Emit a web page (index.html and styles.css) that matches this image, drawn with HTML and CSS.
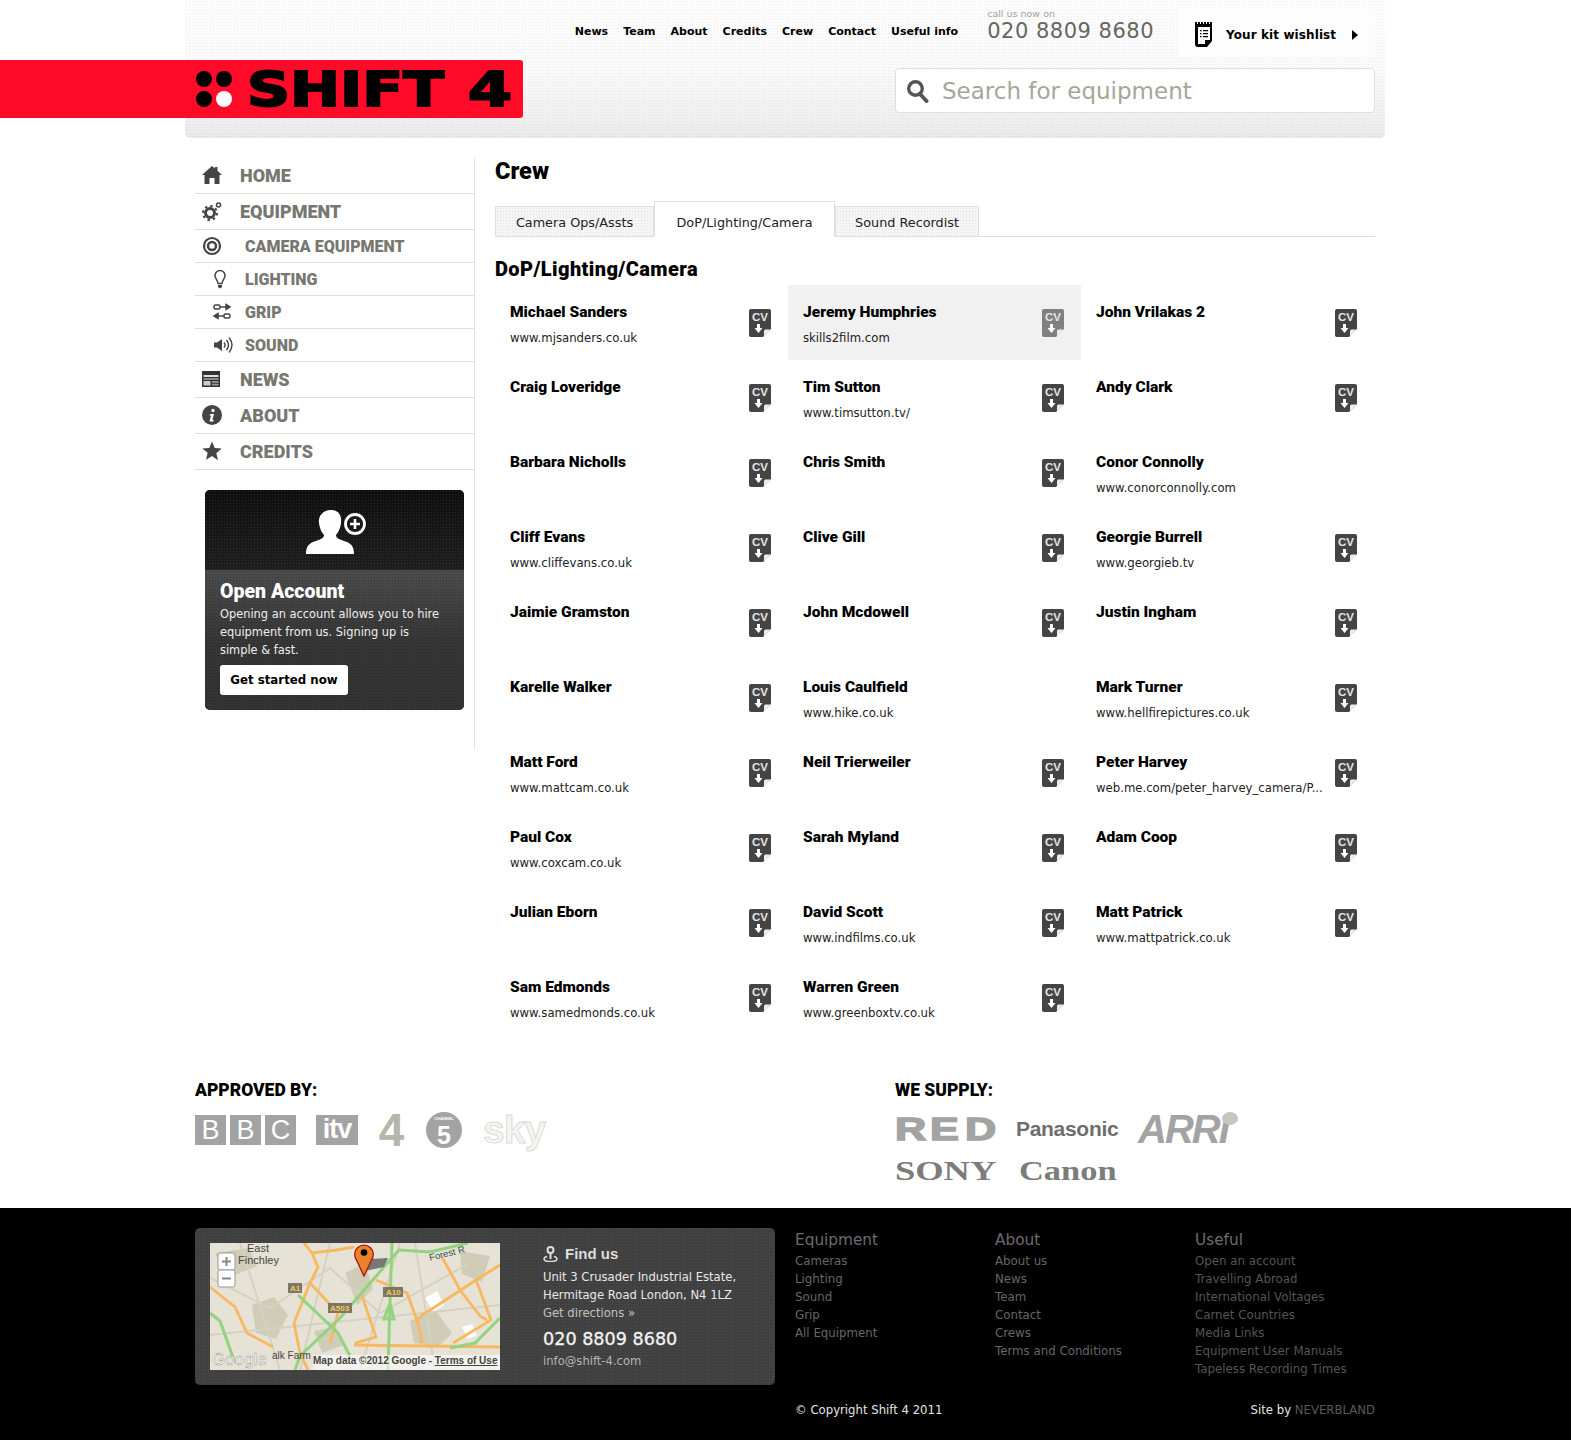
FILE: index.html
```html
<!DOCTYPE html>
<html lang="en">
<head>
  <meta charset="UTF-8">
  <title>Crew - Shift 4</title>
  <link rel="stylesheet" href="styles.css">
</head>
<body>
  <div class="redbar"></div>
  <div class="wrap">
    <header class="header">
      <a class="logo" href="#">
        <svg class="logo-dots" width="36" height="36" viewBox="0 0 36 36"><circle cx="8" cy="8" r="8" fill="#000"/><circle cx="28" cy="8" r="8" fill="#000"/><circle cx="8" cy="28" r="8" fill="#000"/><circle cx="28" cy="28" r="8" fill="#fff"/></svg>
        <svg class="logo-word" width="268" height="58" viewBox="0 0 268 58"><text x="-1" y="46" textLength="197" lengthAdjust="spacingAndGlyphs">SHIFT</text><text x="220" y="46" textLength="44" lengthAdjust="spacingAndGlyphs">4</text></svg>
      </a>
      <div class="header-right">
        <div class="header-top">
          <nav class="topnav">
            <a href="#">News</a><a href="#">Team</a><a href="#">About</a><a href="#">Credits</a><a href="#">Crew</a><a href="#">Contact</a><a href="#">Useful info</a>
          </nav>
          <div class="callus"><small>call us now on</small><strong>020 8809 8680</strong></div>
          <a class="wishlist" href="#">
            <svg width="18" height="25" viewBox="0 0 18 25"><path d="M0 0h2v2h1V0h2v2h1V0h2v2h1V0h2v2h1V0h2v2h1V0h2v19l-5 6H3q-3 0-3-3z" fill="#000"/><path d="M3 5h12v13H10v4H3z" fill="#fff"/><path d="M5 8h1.500v1.200H5zM8 8h5v1.200H8zM5 11h1.500v1.200H5zM8 11h5v1.200H8zM5 14h1.500v1.200H5zM8 14h5v1.200H8z" fill="#000"/></svg>
            <span>Your kit wishlist</span>
            <i class="caret"></i>
          </a>
        </div>
        <div class="search">
          <svg width="24" height="24" viewBox="0 0 24 24"><circle cx="9.500" cy="9.500" r="6.800" fill="none" stroke="#555" stroke-width="3.400"/><path d="M14 15l6.500 7" stroke="#555" stroke-width="4" stroke-linecap="round"/></svg>
          <span>Search for equipment</span>
        </div>
      </div>
    </header>

    <div class="main">
      <aside class="side">
        <ul class="nav">
          <li class="top"><span class="ic"><svg width="20" height="20" viewBox="0 0 20 20"><path d="M10 1l3 2.600V2h2.500v3.800L20 10h-2.500v9h-5v-6h-5v6h-5v-9H0z" fill="#444"/></svg></span>HOME</li>
          <li class="top"><span class="ic"><svg width="20" height="20" viewBox="0 0 20 20"><circle cx="8" cy="12" r="4.500" fill="none" stroke="#444" stroke-width="3"/><circle cx="8" cy="12" r="7" fill="none" stroke="#444" stroke-width="2" stroke-dasharray="2.500 3"/><circle cx="16.500" cy="4" r="2" fill="none" stroke="#444" stroke-width="1.500"/></svg></span>EQUIPMENT</li>
          <li class="sub"><span class="ic"><svg width="20" height="20" viewBox="0 0 20 20"><circle cx="10" cy="10" r="8" fill="none" stroke="#444" stroke-width="2.200"/><circle cx="10" cy="10" r="4" fill="none" stroke="#444" stroke-width="2.500"/></svg></span>CAMERA EQUIPMENT</li>
          <li class="sub indent"><span class="ic"><svg width="14" height="20" viewBox="0 0 14 20"><path d="M7 1.500a5 5 0 0 0-5 5c0 3 2.600 4 3 8h4c.4-4 3-5 3-8a5 5 0 0 0-5-5z" fill="none" stroke="#444" stroke-width="1.500"/><path d="M5 16h4v2l-2 1.500L5 18z" fill="#444"/></svg></span>LIGHTING</li>
          <li class="sub indent"><span class="ic"><svg width="18" height="18" viewBox="0 0 18 18"><rect x="1" y="2" width="6" height="4" rx="1.500" fill="none" stroke="#444" stroke-width="1.500"/><path d="M7 4h8M13 1.500L17 4l-4 2.500z" stroke="#444" stroke-width="1.500" fill="#444"/><rect x="11" y="11" width="6" height="4" rx="1.500" fill="none" stroke="#444" stroke-width="1.500"/><path d="M11 13H3M5 10.500L1 13l4 2.500z" stroke="#444" stroke-width="1.500" fill="#444"/></svg></span>GRIP</li>
          <li class="sub indent"><span class="ic"><svg width="20" height="18" viewBox="0 0 20 18"><path d="M1 6.500h3L9 3v12L4 11.500H1z" fill="#444"/><path d="M11 6.500q2 2.500 0 5M13.500 4q4 5 0 10M16 1.500q6 7.500 0 15" fill="none" stroke="#444" stroke-width="1.400"/></svg></span>SOUND</li>
          <li class="top"><span class="ic"><svg width="18" height="16" viewBox="0 0 18 16"><rect width="18" height="16" fill="#333"/><path d="M1.500 4h15v2h-15zM1.500 7.500h15v1h-15z" fill="#ddd"/><path d="M1.500 10h7v4.500h-7z" fill="#ccc"/><path d="M10 10h6.500v1.800H10zM10 12.800h6.500v1.700H10z" fill="#999"/></svg></span>NEWS</li>
          <li class="top"><span class="ic"><svg width="20" height="20" viewBox="0 0 20 20"><circle cx="10" cy="10" r="10" fill="#444"/><circle cx="11" cy="5.500" r="1.700" fill="#fff"/><path d="M8 9h4l-1.600 6h1.400l-.4 1.400H7.500L9 10.400H7.700z" fill="#fff"/></svg></span>ABOUT</li>
          <li class="top"><span class="ic"><svg width="20" height="20" viewBox="0 0 20 20"><path d="M10 .5l2.700 6.600 7 .5-5.400 4.600 1.700 7L10 15l-6 3.700 1.700-7L.3 7.600l7-.5z" fill="#444"/></svg></span>CREDITS</li>
        </ul>
        <div class="account">
          <div class="account-top">
            <svg width="62" height="46" viewBox="0 0 62 46"><path d="M26 1c8 0 11 6 10 13-.5 5-3 10-5 12 0 3 3 4 8 6 7 2 10 5 10 13H1c0-8 3-11 10-13 5-2 8-3 8-6-2-2-4.500-7-5-12C13 7 18 1 26 1z" fill="#fff"/><circle cx="50" cy="15" r="9.500" fill="#1a1a1a" stroke="#fff" stroke-width="2.800"/><path d="M50 10v10M45 15h10" stroke="#fff" stroke-width="2.600"/></svg>
          </div>
          <div class="account-body">
            <h3>Open Account</h3>
            <p>Opening an account allows you to hire equipment from us. Signing up is simple &amp; fast.</p>
            <a class="btn" href="#">Get started now</a>
          </div>
        </div>
      </aside>

      <section class="content">
        <h1>Crew</h1>
        <div class="tabs">
          <a class="tab" href="#">Camera Ops/Assts</a>
          <a class="tab active" href="#">DoP/Lighting/Camera</a>
          <a class="tab" href="#">Sound Recordist</a>
        </div>
        <h2>DoP/Lighting/Camera</h2>
        <div class="crew" id="crew"></div>
      </section>
    </div>

    <div class="logos">
      <div class="logos-col">
        <h4>APPROVED BY:</h4>
        <div class="approved">
          <div class="bbc"><b>B</b><b>B</b><b>C</b></div>
          <div class="itv">itv</div>
          <div class="ch4">4</div>
          <div class="ch5"><small>CHANNEL</small>5</div>
          <div class="sky">sky</div>
        </div>
      </div>
      <div class="logos-col">
        <h4>WE SUPPLY:</h4>
        <div class="supply">
          <div class="supply-row">
            <div class="red"><b>R</b><b>E</b><b>D</b></div>
            <div class="panasonic">Panasonic</div>
            <div class="arri">ARRI<i></i></div>
          </div>
          <div class="supply-row second">
            <div class="sony">SONY</div>
            <div class="canon">Canon</div>
          </div>
        </div>
      </div>
    </div>
  </div>

  <footer class="footer">
    <div class="footer-in">
      <div class="find">
        <div class="map">
          <svg width="290" height="127" viewBox="0 0 290 127">
            <rect width="290" height="127" fill="#e6e2d6"/>
            <g fill="#cfccb8">
              <path d="M42 62l22-8 14 18-12 24-20-6zM135 30l20-10 8 26-16 16zM200 78l26-10 16 22-14 14-24-4zM250 8l30 5-8 26-20-8zM5 10l34-5 8 18-30 12z"/>
              <path d="M104 88l22-4 8 18-22 8z"/>
            </g>
            <g fill="#fff"><path d="M215 55l12-7 7 14-10 7zM252 84l10-3 5 12-10 3z"/></g>
            <g fill="none" stroke="#d5d2c3" stroke-width="2">
              <path d="M0 35l60 30 60-40 50 45 90-50M30 0l40 127M120 0l-30 127M205 0l20 127M0 92l290-30M150 127l40-127"/>
            </g>
            <g fill="none" stroke="#f8b85f" stroke-width="2.800">
              <path d="M94 0L102 10L127 7L144 4M102 10L108 24L100 40L128 70M0 44L25 64L37 90L63 104M84 80L90 110L98 127"/>
              <path d="M151 50L166 94L145 100M166 37L197 50L208 80L212 100M144 102L290 104M205 77L266 37L290 22"/>
              <path d="M232 14L250 47L270 73L277 77M266 37L281 77L243 100M128 70L120 100M100 40L84 80"/>
            </g>
            <g fill="none" stroke="#93d37f" stroke-width="3">
              <path d="M0 70L10 78L25 120M88 52L128 90L140 113M85 127L90 113L130 75L174 24L189 7L220 9L258 0"/>
              <path d="M182 0L180 60L178 127M174 76h10l-4-16zM240 105L265 100L290 75"/>
            </g>
            <path d="M155 28l5-12 18-1-4 9z" fill="#777"/>
            <path d="M154 33l-7.500-16a9.300 9.300 0 1 1 15 0z" fill="#e8832a" stroke="#b01010" stroke-width="1.300"/>
            <circle cx="154" cy="9.500" r="3.300" fill="#000"/>
            <rect x="8" y="10" width="17" height="17" rx="2" fill="#fff" stroke="#999"/>
            <rect x="8" y="27" width="17" height="17" rx="2" fill="#fff" stroke="#999"/>
            <path d="M12 18.500h9M16.500 14v9M12 35.500h9" stroke="#888" stroke-width="2"/>
            <rect x="103" y="112" width="187" height="15" fill="#fff" opacity=".55"/>
            <g class="map-text">
              <text x="37" y="9" font-size="11">East</text>
              <text x="28" y="21" font-size="11">Finchley</text>
              <text x="220" y="18" font-size="9.500" fill="#355" transform="rotate(-14 220 18)">Forest R</text>
              <text x="62" y="116" font-size="10">alk Farm</text>
              <text x="103" y="121" font-size="10" font-weight="bold">Map data ©2012 Google - <tspan text-decoration="underline">Terms of Use</tspan></text>
              <text x="2" y="122" font-size="17" fill="#fff" stroke="#888" stroke-width=".4">Google</text>
            </g>
            <g class="map-tag">
              <rect x="78" y="40" width="14" height="10" fill="#7d7866"/><text x="80" y="48" font-size="8" fill="#f6c65b" font-weight="bold">A1</text>
              <rect x="118" y="60" width="24" height="10" fill="#7d7866"/><text x="120" y="68" font-size="8" fill="#f6c65b" font-weight="bold">A503</text>
              <rect x="173" y="44" width="20" height="10" fill="#7d7866"/><text x="176" y="52" font-size="8" fill="#f6c65b" font-weight="bold">A10</text>
            </g>
          </svg>
        </div>
        <div class="find-text">
          <h5><svg width="15" height="16" viewBox="0 0 15 16"><circle cx="7.500" cy="4" r="3" fill="none" stroke="#ddd" stroke-width="2"/><path d="M7.500 7v6" stroke="#ddd" stroke-width="2"/><path d="M4 10.500c-2 .5-3 1.500-3 2.500 0 1.500 3 2.500 6.500 2.500S14 14.500 14 13c0-1-1-2-3-2.500" fill="none" stroke="#ddd" stroke-width="1.500"/></svg>Find us</h5>
          <p>Unit 3 Crusader Industrial Estate,<br>Hermitage Road London, N4 1LZ</p>
          <a class="dir" href="#">Get directions »</a>
          <div class="tel">020 8809 8680</div>
          <a class="mail" href="#">info@shift-4.com</a>
        </div>
      </div>
      <div class="footer-right">
        <div class="fcols">
          <div class="fcol">
            <h6>Equipment</h6>
            <a href="#">Cameras</a><a href="#">Lighting</a><a href="#">Sound</a><a href="#">Grip</a><a href="#">All Equipment</a>
          </div>
          <div class="fcol">
            <h6>About</h6>
            <a href="#">About us</a><a href="#">News</a><a href="#">Team</a><a href="#">Contact</a><a href="#">Crews</a><a href="#">Terms and Conditions</a>
          </div>
          <div class="fcol dim">
            <h6>Useful</h6>
            <a href="#">Open an account</a><a href="#">Travelling Abroad</a><a href="#">International Voltages</a><a href="#">Carnet Countries</a><a href="#">Media Links</a><a href="#">Equipment User Manuals</a><a href="#">Tapeless Recording Times</a>
          </div>
        </div>
        <div class="fbase">
          <span>© Copyright Shift 4 2011</span>
          <span>Site by <em>NEVERBLAND</em></span>
        </div>
      </div>
    </div>
  </footer>

  <script>
    const people = [
      ['Michael Sanders', 'www.mjsanders.co.uk'], ['Jeremy Humphries', 'skills2film.com'], ['John Vrilakas 2', ''],
      ['Craig Loveridge', ''], ['Tim Sutton', 'www.timsutton.tv/'], ['Andy Clark', ''],
      ['Barbara Nicholls', ''], ['Chris Smith', ''], ['Conor Connolly', 'www.conorconnolly.com', true],
      ['Cliff Evans', 'www.cliffevans.co.uk'], ['Clive Gill', ''], ['Georgie Burrell', 'www.georgieb.tv'],
      ['Jaimie Gramston', ''], ['John Mcdowell', ''], ['Justin Ingham', ''],
      ['Karelle Walker', ''], ['Louis Caulfield', 'www.hike.co.uk', true], ['Mark Turner', 'www.hellfirepictures.co.uk'],
      ['Matt Ford', 'www.mattcam.co.uk'], ['Neil Trierweiler', ''], ['Peter Harvey', 'web.me.com/peter_harvey_camera/P...'],
      ['Paul Cox', 'www.coxcam.co.uk'], ['Sarah Myland', ''], ['Adam Coop', ''],
      ['Julian Eborn', ''], ['David Scott', 'www.indfilms.co.uk'], ['Matt Patrick', 'www.mattpatrick.co.uk'],
      ['Sam Edmonds', 'www.samedmonds.co.uk'], ['Warren Green', 'www.greenboxtv.co.uk']
    ];
    const cvIcon = '<svg class="cv" width="22" height="28" viewBox="0 0 22 28"><path d="M2 0h18a2 2 0 0 1 2 2v18l-8 8H2a2 2 0 0 1-2-2V2a2 2 0 0 1 2-2z" fill="currentColor"/><path d="M15 27.500v-6l1-1h5.500z" fill="#eee"/><text x="11" y="12" text-anchor="middle">CV</text><path d="M8 15h3v4h2.500L9.500 24l-4-5H8z" fill="#fff"/></svg>';
    document.getElementById('crew').innerHTML = people.map(function (p, i) {
      const hover = i === 1 ? ' hover' : '';
      const icon = p[2] ? '' : cvIcon;
      const url = p[1] ? '<a href="#">' + p[1] + '</a>' : '';
      return '<div class="person' + hover + '"><strong>' + p[0] + '</strong>' + url + icon + '</div>';
    }).join('');
  </script>
</body>
</html>
```
FILE: styles.css
```css
* {
  box-sizing: border-box;
}
body {
  margin: 0;
  background: #fff;
  color: #000;
  font-family: "DejaVu Sans", sans-serif;
  font-size: 12px;
}
a {
  color: inherit;
  text-decoration: none;
}
h1, h2, h3, h4, h5, h6, p, ul {
  margin: 0;
  padding: 0;
}
.redbar {
  position: absolute;
  z-index: 1;
  left: 0;
  top: 60px;
  width: 523px;
  height: 58px;
  background: #ff0a28;
  border-radius: 0 3px 3px 0;
}
.wrap {
  width: 1200px;
  margin-left: 185px;
}

/* header */
.header {
  height: 138px;
  padding: 0 10px;
  display: flex;
  justify-content: space-between;
  border-radius: 0 0 5px 5px;
  background-color: #f6f6f6;
  background-image:
    radial-gradient(rgba(0, 0, 0, .06) .5px, transparent .7px),
    linear-gradient(#fdfdfd, #fafafa 50%, #f0f0f0 85%, #e9e9e9);
  background-size: 3px 3px, 100% 100%;
}
.logo {
  position: relative;
  z-index: 2;
  display: flex;
  align-items: flex-start;
  width: 328px;
  height: 58px;
  margin-top: 60px;
  padding-left: 1px;
  gap: 16px;
}
.logo-dots {
  margin-top: 11px;
}
.logo-word text {
  font-family: "DejaVu Sans", sans-serif;
  font-weight: bold;
  font-size: 48px;
  stroke: #000;
  stroke-width: 2px;
}
.header-right {
  width: 480px;
  position: relative;
}
.header-top {
  position: absolute;
  right: 0;
  top: 10px;
  display: flex;
  align-items: flex-start;
  white-space: nowrap;
}
.topnav {
  display: flex;
  gap: 15px;
  margin-top: 15px;
  margin-right: 29px;
  font-size: 11px;
  font-weight: 600;
}
.callus small {
  display: block;
  font-size: 9.500px;
  line-height: 9px;
  margin-top: -1px;
  color: #a3a39a;
}
.callus strong {
  display: block;
  font-size: 21px;
  font-weight: normal;
  line-height: 27px;
  letter-spacing: .5px;
  color: #666660;
}
.callus {
  margin-right: 25px;
}
.wishlist {
  display: flex;
  align-items: center;
  width: 196px;
  height: 47px;
  padding: 2px 0 0 16px;
  background: #fdfdfd;
  border-radius: 4px;
  font-size: 12px;
  font-weight: 600;
}
.wishlist span {
  margin-left: 13px;
  letter-spacing: .1px;
}
.caret {
  margin-left: 16px;
  border-left: 6px solid #000;
  border-top: 5px solid transparent;
  border-bottom: 5px solid transparent;
}
.search {
  position: absolute;
  left: 0;
  top: 68px;
  width: 480px;
  height: 45px;
  display: flex;
  align-items: center;
  gap: 12px;
  padding-left: 10px;
  background: #fff;
  border: 1px solid #e0dfd8;
  border-radius: 4px;
  color: #a6a69a;
  font-size: 23px;
}

/* main columns */
.main {
  display: flex;
  align-items: flex-start;
  padding: 20px 10px 0;
}
.side {
  width: 280px;
  height: 592px;
  border-right: 1px solid #e2e1da;
  flex-shrink: 0;
}
.nav {
  list-style: none;
  margin-top: 0;
}
.nav li {
  display: flex;
  align-items: center;
  border-bottom: 1px solid #dfded7;
  color: #777770;
  font-family: Roboto, sans-serif;
  font-weight: 900;
}
.nav .top {
  height: 36px;
  font-size: 18px;
  padding-bottom: 1px;
}
.nav .sub {
  height: 33px;
  font-size: 16px;
}
.ic {
  width: 45px;
  padding-left: 7px;
  display: flex;
  justify-content: flex-start;
  flex-shrink: 0;
}
.sub .ic {
  width: 50px;
}
.indent .ic {
  padding-left: 18px;
}
.account {
  width: 259px;
  margin: 20px 0 0 10px;
  border-radius: 5px;
  overflow: hidden;
  color: #fff;
}
.account-top {
  height: 80px;
  padding: 19px 0 0 100px;
  background-color: #1c1c1c;
  background-image: radial-gradient(rgba(255, 255, 255, .1) .6px, transparent .8px), linear-gradient(#0e0e0e, #1e1e1e);
  background-size: 3px 3px, 100% 100%;
}
.account-body {
  height: 140px;
  padding: 10px 15px 0;
  background-color: #333;
  background-image: radial-gradient(rgba(0, 0, 0, .22) .6px, transparent .8px), linear-gradient(#4c4c4c, #363636 50%, #333);
  background-size: 3px 3px, 100% 100%;
}
.account h3 {
  font-family: Roboto, sans-serif;
  font-weight: 900;
  font-size: 19.500px;
  line-height: 23px;
  margin-bottom: 2px;
}
.account p {
  font-size: 11.400px;
  line-height: 18px;
  color: #eee;
}
.btn {
  display: inline-block;
  margin-top: 6px;
  width: 128px;
  height: 30px;
  line-height: 30px;
  text-align: center;
  background: #fff;
  color: #000;
  border-radius: 3px;
  font-weight: 600;
  font-size: 11.800px;
}

/* crew list */
.content {
  width: 900px;
  padding-left: 20px;
}
.content h1 {
  font-family: Roboto, sans-serif;
  font-weight: 900;
  font-size: 23.500px;
  line-height: 28px;
  margin-top: -1px;
}
.tabs {
  display: flex;
  align-items: flex-end;
  height: 44px;
  margin-top: 8px;
  border-bottom: 1px solid #e0dfd8;
}
.tab {
  width: 159px;
  height: 31px;
  padding-top: 8px;
  margin-bottom: -1px;
  text-align: center;
  background-color: #f5f5f5;
  background-image: radial-gradient(rgba(0, 0, 0, .08) .5px, transparent .7px);
  background-size: 3px 3px;
  border: 1px solid #e0dfd8;
  font-size: 12.800px;
  color: #222;
  white-space: nowrap;
}
.tab:last-child {
  width: 144px;
}
.tab.active {
  width: 181px;
  height: 36px;
  padding-top: 13px;
  background: #fff;
  border-bottom-color: #fff;
  border-top: 1px solid #e0dfd8;
  border-left: 1px solid #e0dfd8;
  border-right: 1px solid #e0dfd8;
}
.content h2 {
  font-family: Roboto, sans-serif;
  font-weight: 900;
  font-size: 20px;
  line-height: 24px;
  margin-top: 20px;
  margin-bottom: 4px;
  letter-spacing: .4px;
}
.crew {
  display: grid;
  grid-template-columns: repeat(3, 293px);
  grid-auto-rows: 75px;
}
.person {
  position: relative;
  padding: 17px 30px 0 15px;
}
.person strong {
  display: block;
  font-family: Roboto, sans-serif;
  font-weight: 900;
  font-size: 15.500px;
  line-height: 20px;
}
.person a {
  display: block;
  margin-top: 9px;
  font-size: 11.700px;
  line-height: 15px;
  color: #222;
  white-space: nowrap;
}
.person.hover {
  background: #f1f1f1;
}
.cv {
  position: absolute;
  right: 17px;
  top: 24px;
  color: #444;
}
.hover .cv {
  color: #808080;
}
.cv text {
  font-family: "Liberation Sans", sans-serif;
  font-weight: bold;
  font-size: 11.500px;
  fill: #e4e4e4;
}

/* logos */
.logos {
  display: flex;
  height: 139px;
  margin-top: 34px;
  padding: 0 10px;
}
.logos-col {
  width: 700px;
}
.logos-col + .logos-col {
  width: 480px;
}
.logos h4 {
  font-family: Roboto, sans-serif;
  font-weight: 900;
  font-size: 17.500px;
  line-height: 24px;
  margin-top: 9px;
}
.approved {
  display: flex;
  align-items: center;
  height: 36px;
  margin-top: 10px;
  font-family: "Liberation Sans", sans-serif;
  color: #a3a3a3;
}
.bbc {
  display: flex;
  gap: 4px;
}
.bbc b {
  width: 31px;
  height: 30px;
  background: #a3a3a3;
  color: #fff;
  text-align: center;
  font-weight: normal;
  font-size: 27px;
  line-height: 30px;
}
.itv {
  margin-left: 20px;
  width: 42px;
  height: 30px;
  background: #a3a3a3;
  color: #fff;
  font-weight: bold;
  font-size: 27px;
  line-height: 29px;
  text-align: center;
  letter-spacing: -1px;
}
.ch4 {
  margin-left: 20px;
  width: 27px;
  font-size: 46px;
  font-weight: bold;
  line-height: 36px;
  text-align: center;
  color: #b5b5ac;
}
.ch5 {
  margin-left: 21px;
  width: 36px;
  height: 36px;
  border-radius: 50%;
  background: #a3a3a3;
  color: #fff;
  font-weight: bold;
  font-size: 25px;
  line-height: 27px;
  text-align: center;
}
.ch5 small {
  display: block;
  font-size: 4px;
  line-height: 7px;
  padding-top: 3px;
}
.sky {
  margin-left: 21px;
  font-size: 39px;
  line-height: 36px;
  color: #f4f4f2;
  -webkit-text-stroke: 1px #dedcd6;
  font-weight: bold;
  letter-spacing: -1px;
}
.supply {
  margin-top: 11px;
  font-family: "Liberation Sans", sans-serif;
  color: #9b9b9b;
}
.supply-row {
  display: flex;
  align-items: center;
  height: 32px;
}
.supply-row.second {
  margin-top: 13px;
  height: 26px;
}
.red {
  display: flex;
  gap: 3px;
  width: 121px;
  font-size: 32px;
  line-height: 26px;
  font-weight: bold;
  -webkit-text-stroke: 1.500px #a3a3a3;
  color: #a3a3a3;
}
.red b {
  width: 32px;
  transform: scaleX(1.35);
  transform-origin: left;
}
.panasonic {
  width: 122px;
  font-size: 21px;
  font-weight: bold;
  letter-spacing: -.3px;
  color: #6e6e6e;
}
.arri {
  position: relative;
  font-size: 40px;
  line-height: 32px;
  font-weight: bold;
  font-style: italic;
  letter-spacing: -2px;
  color: #a3a3a3;
}
.arri i {
  position: absolute;
  left: 84px;
  top: -1px;
  width: 16px;
  height: 13px;
  border-radius: 50%;
  background: #c6c6be;
}
.sony {
  width: 124px;
  font-family: "Liberation Serif", serif;
  font-size: 27px;
  font-weight: bold;
  transform: scaleX(1.35);
  transform-origin: left;
  color: #7c7c7c;
}
.canon {
  font-family: "Liberation Serif", serif;
  font-size: 28px;
  font-weight: bold;
  color: #7c7c7c;
  transform: scaleX(1.23);
  transform-origin: left;
}

/* footer */
.footer {
  background: #000;
  height: 232px;
  padding: 20px 0 0 195px;
}
.footer-in {
  display: flex;
  width: 1180px;
}
.find {
  display: flex;
  width: 580px;
  height: 157px;
  padding: 15px;
  background-color: #404040;
  background-image: radial-gradient(rgba(255, 255, 255, .07) .6px, transparent .8px);
  background-size: 3px 3px;
  border-radius: 5px;
}
.map {
  width: 290px;
  height: 127px;
  flex-shrink: 0;
}
.map svg {
  display: block;
}
.map-text text, .map-tag text {
  font-family: "Liberation Sans", sans-serif;
}
.map-text {
  fill: #444;
}
.find-text {
  padding-left: 43px;
  color: #e8e8e8;
  font-size: 11.600px;
  white-space: nowrap;
}
.find-text h5 {
  display: flex;
  align-items: center;
  gap: 7px;
  font-weight: bold;
  line-height: 22px;
  margin-top: 0;
  color: #ddd;
  font-family: "Liberation Sans", sans-serif;
  font-size: 15px;
}
.find-text p {
  line-height: 18px;
  margin-top: 3px;
}
.find-text .dir {
  display: block;
  line-height: 18px;
  color: #c4c4bc;
}
.tel {
  font-size: 17.600px;
  -webkit-text-stroke: .3px #f2f2f2;
  line-height: 26px;
  margin-top: 4px;
  color: #f2f2f2;
}
.find-text .mail {
  display: block;
  line-height: 18px;
  margin-top: 0;
  color: #b5b5ae;
}
.footer-right {
  width: 580px;
  margin-left: 20px;
}
.fcols {
  display: flex;
  height: 173px;
}
.fcol {
  width: 200px;
  color: #666;
}
.fcol.dim {
  width: 180px;
  color: #555;
}
.fcol h6 {
  font-size: 15.300px;
  font-weight: normal;
  line-height: 24px;
  color: #6c6c6c;
}
.fcol a {
  display: block;
  font-size: 11.800px;
  line-height: 18px;
  white-space: nowrap;
}
.fbase {
  display: flex;
  justify-content: space-between;
  margin-top: 0;
  font-size: 11.700px;
  line-height: 18px;
  color: #e6e6e6;
}
.fbase em {
  font-style: normal;
  color: #5a5a5a;
}
```
